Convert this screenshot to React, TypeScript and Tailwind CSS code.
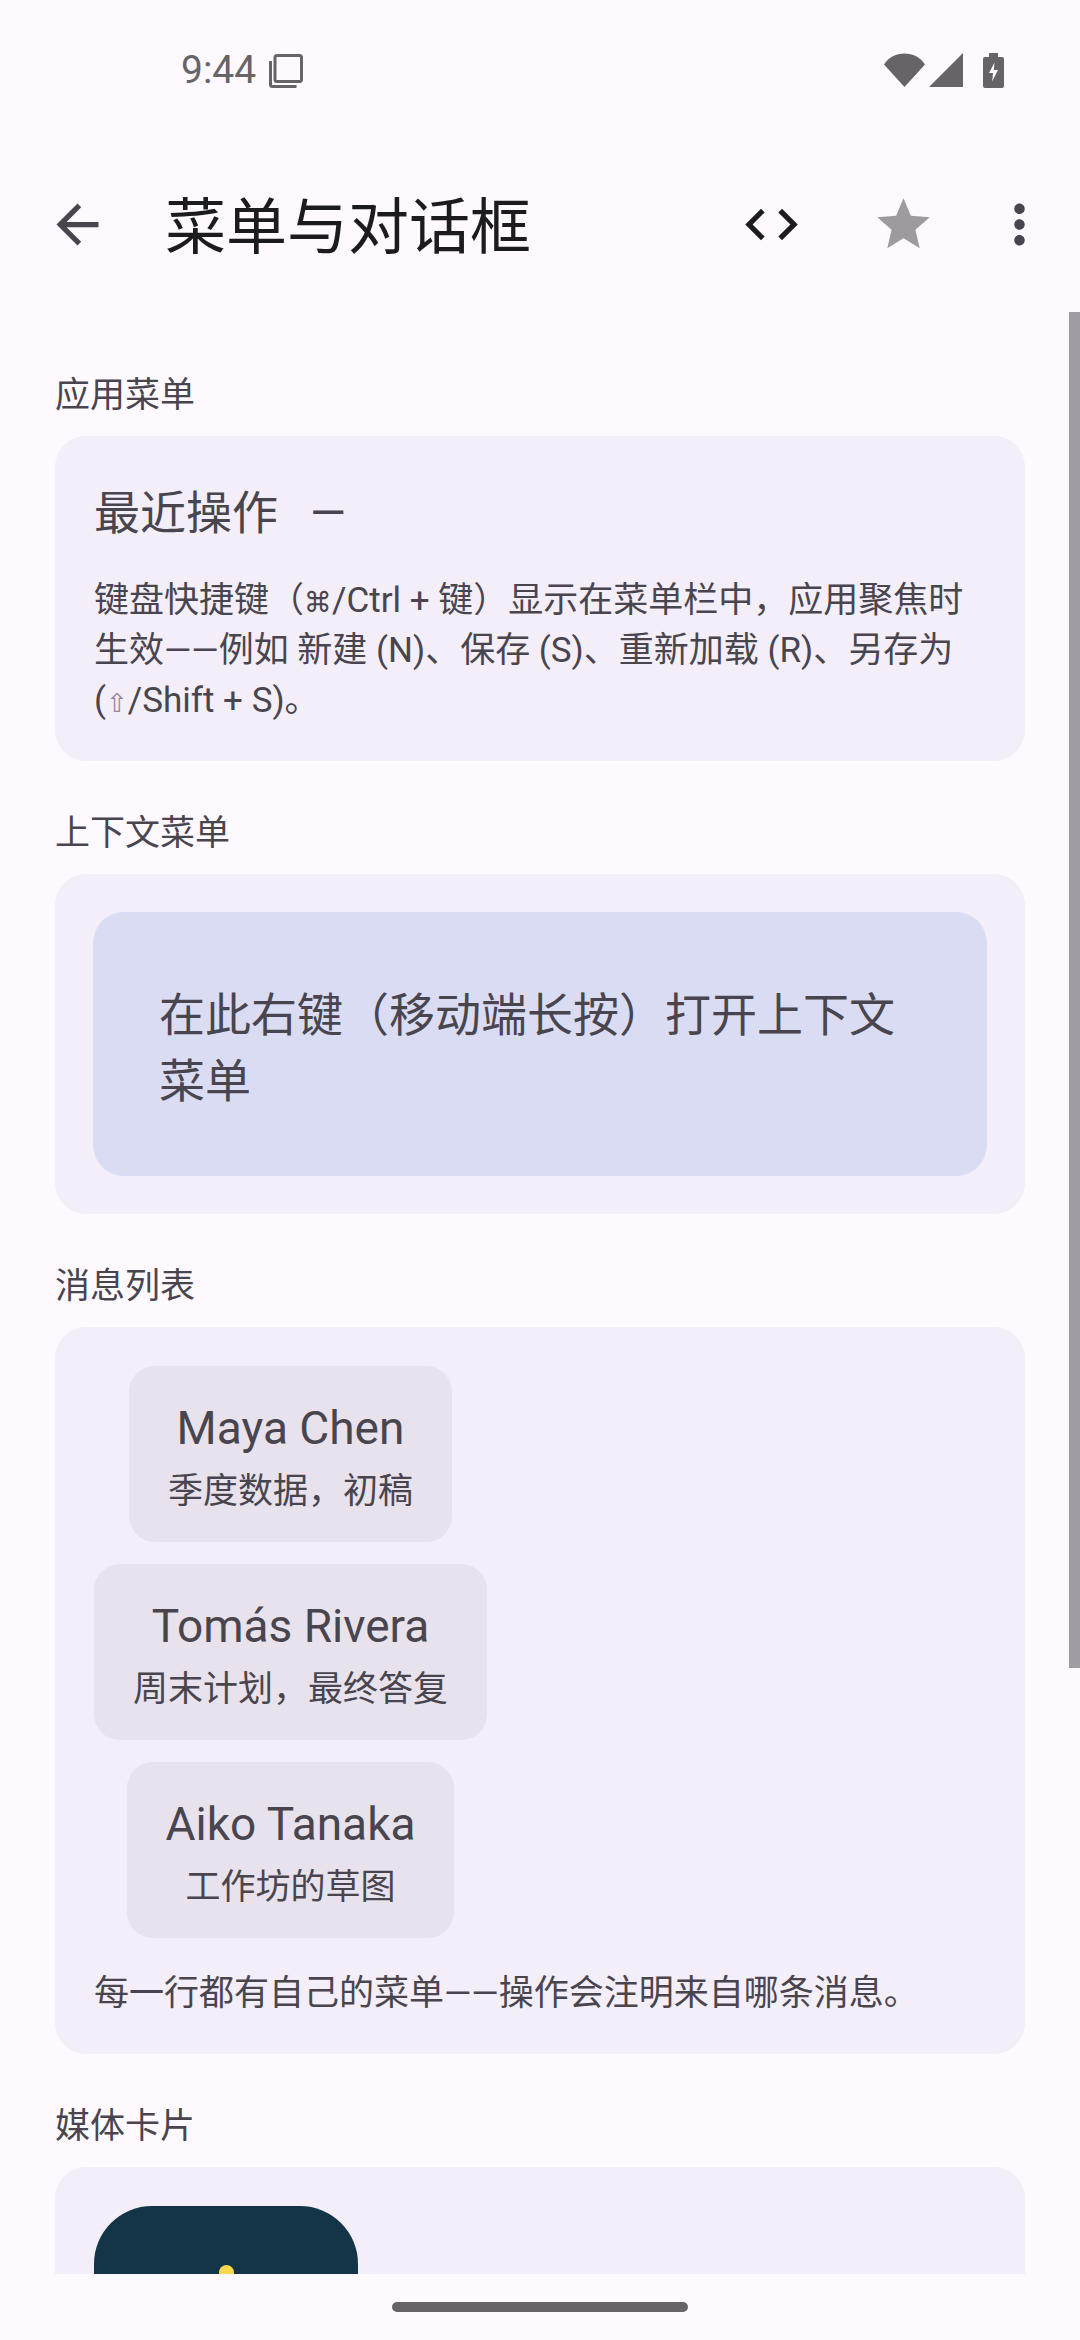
import React from "react";

const FONT = "font-['Roboto','Noto_Sans_CJK_SC',sans-serif]";

function Icon({ d, className }: { d: string; className: string }) {
  return (
    <svg viewBox="0 0 24 24" className={className} fill="currentColor">
      <path d={d} />
    </svg>
  );
}

function Label({ children, first }: { children: React.ReactNode; first?: boolean }) {
  return (
    <div className={`text-[35px] leading-[50px] text-[#49454f] mb-[15px] ${first ? "" : "mt-[48px]"}`}>
      {children}
    </div>
  );
}

function Bubble({ name, sub }: { name: string; sub: string }) {
  return (
    <div className="flex flex-col items-center rounded-[26px] bg-[#e7e2ec] px-[39px] pt-[29px] pb-[25px]">
      <div className="text-[46px] leading-[66px] text-[#49454f]">{name}</div>
      <div className="text-[35px] leading-[50px] text-[#49454f] mt-[6px]">{sub}</div>
    </div>
  );
}

export default function App() {
  return (
    <div className={`${FONT} relative flex flex-col w-[1080px] h-[2340px] overflow-hidden bg-[#fef9ff]`}>
      {/* status bar */}
      <div className="flex items-center h-[140px] pl-[181px] pr-[76px] text-[#666467]">
        <span className="text-[39px] leading-[44px]">9:44</span>
        <svg viewBox="0 0 34 34" className="w-[34px] h-[34px] ml-[13px] mt-[2px]" fill="none" stroke="currentColor" strokeWidth="3">
          <rect x="6" y="1.5" width="26.5" height="26" rx="2" />
          <path d="M1.5 7v23.5a2 2 0 0 0 2 2h24" />
        </svg>
        <div className="flex-1" />
        <svg viewBox="0 0 41 34" className="w-[41px] h-[34px]" fill="currentColor">
          <path d="M0 11.5C5 4 12 0.5 20.5 0.5S36 4 41 11.5L20.5 34z" />
        </svg>
        <svg viewBox="0 0 34 34" className="w-[34px] h-[34px] ml-[4px]" fill="currentColor">
          <path d="M34 0v34H0z" />
        </svg>
        <svg viewBox="0 0 21 35" className="w-[21px] h-[35px] ml-[20px]">
          <path fill="currentColor" d="M6 0h9v4h4a2 2 0 0 1 2 2v27a2 2 0 0 1-2 2H2a2 2 0 0 1-2-2V6a2 2 0 0 1 2-2h4z" />
          <path fill="#fef9ff" d="M11.5 9.5 6 20h4l-.8 8.5L15 17h-4.2z" />
        </svg>
      </div>

      {/* top app bar */}
      <div className="flex items-center h-[172px] pb-[4px] pl-[46px]">
        <Icon className="w-[63px] h-[63px] text-[#49454f]" d="M20 11H7.83l5.59-5.59L12 4l-8 8 8 8 1.41-1.41L7.83 13H20v-2z" />
        <div className="ml-[56px] mt-[7px] text-[61px] leading-[80px] text-[#1c1b1f]">菜单与对话框</div>
        <div className="flex-1" />
        <Icon className="w-[63px] h-[63px] text-[#1c1b1f]" d="M9.4 16.6L4.8 12l4.6-4.6L8 6l-6 6 6 6 1.4-1.4zm5.2 0l4.6-4.6-4.6-4.6L16 6l6 6-6 6-1.4-1.4z" />
        <Icon className="w-[63px] h-[63px] ml-[69px] text-[#9e9a9f]" d="M12 17.27L18.18 21l-1.64-7.03L22 9.24l-7.19-.61L12 2 9.19 8.63 2 9.24l5.46 4.73L5.82 21z" />
        <Icon className="w-[63px] h-[63px] ml-[53px] mr-[29px] text-[#49454f]" d="M12 8c1.1 0 2-.9 2-2s-.9-2-2-2-2 .9-2 2 .9 2 2 2zm0 2c-1.1 0-2 .9-2 2s.9 2 2 2 2-.9 2-2-.9-2-2-2zm0 6c-1.1 0-2 .9-2 2s.9 2 2 2 2-.9 2-2-.9-2-2-2z" />
      </div>

      {/* scrolling content */}
      <div className="flex-1 min-h-0 overflow-hidden pl-[55px] pr-[55px] pt-[59px]">
        <Label first>应用菜单</Label>
        <section className="rounded-[31px] bg-[#f3eef8] px-[39px] pt-[42px] pb-[35px]">
          <div className="flex items-center h-[70px] text-[46px] leading-[66px] text-[#49454f]">
            <span>最近操作</span>
            <span className="ml-[32px]">—</span>
          </div>
          <p className="mt-[28px] text-[35px] leading-[50px] text-[#49454f]">
            键盘快捷键（<span className="font-['DejaVu_Sans',sans-serif] text-[28px] leading-[0]">⌘</span>/Ctrl + 键）显示在菜单栏中，应用聚焦时生效——例如 新建 (N)、保存 (S)、重新加载 (R)、另存为 (<span className="font-['DejaVu_Sans',sans-serif] text-[26px] leading-[0] text-[#8f8b95]">⇧</span>/Shift + S)。
          </p>
        </section>

        <Label>上下文菜单</Label>
        <section className="rounded-[31px] bg-[#f3eef8] p-[38px]">
          <div className="rounded-[31px] bg-[#d9dcf2] px-[66px] pt-[70px] pb-[62px] text-[46px] leading-[66px] text-[#49454f]">
            在此右键（移动端长按）打开上下文菜单
          </div>
        </section>

        <Label>消息列表</Label>
        <section className="rounded-[31px] bg-[#f3eef8] px-[39px] pt-[39px] pb-[35px]">
          <div className="inline-flex flex-col items-center gap-[22px]">
            <Bubble name="Maya Chen" sub="季度数据，初稿" />
            <Bubble name="Tomás Rivera" sub="周末计划，最终答复" />
            <Bubble name="Aiko Tanaka" sub="工作坊的草图" />
          </div>
          <p className="mt-[31px] text-[35px] leading-[50px] text-[#49454f]">
            每一行都有自己的菜单——操作会注明来自哪条消息。
          </p>
        </section>

        <Label>媒体卡片</Label>
        <section className="rounded-[31px] bg-[#f3eef8] p-[39px]">
          <div className="flex justify-center w-[264px] h-[264px] rounded-[58px] bg-[#143548]">
            <div className="w-[15px] h-[15px] mt-[59px] rounded-full bg-[#ffd84d]" />
          </div>
        </section>
      </div>

      {/* gesture area */}
      <div className="flex justify-center h-[66px] pt-[28px] bg-[#fef9ff]">
        <div className="w-[296px] h-[10px] rounded-full bg-[#666467]" />
      </div>

      {/* scrollbar */}
      <div className="absolute right-0 top-[312px] w-[11px] h-[1356px] bg-[#a09ca3]" />
    </div>
  );
}
